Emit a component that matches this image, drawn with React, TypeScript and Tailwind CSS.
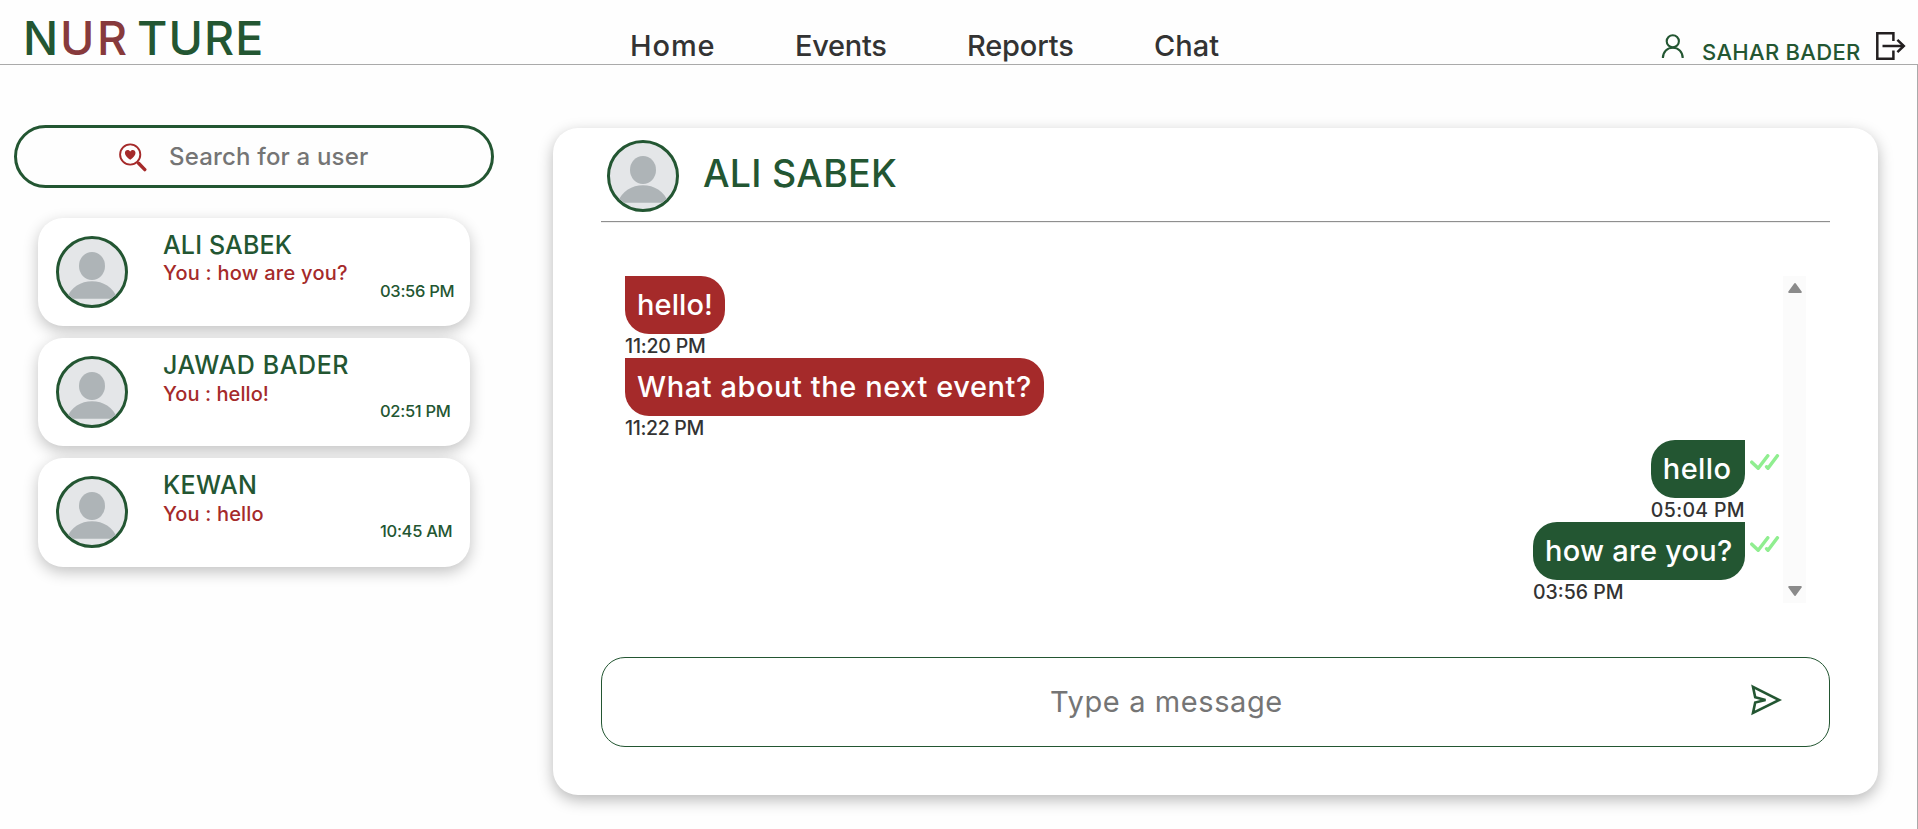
type Contact = {
  name: string;
  nameClass: string;
  last: string;
  lastClass: string;
  time: string;
  cardClass: string;
};

type Message = {
  text: string;
  time: string;
  mine: boolean;
  bubbleClass: string;
  timeClass: string;
};

const navItems = [
  { label: "Home", className: "w-[165px] tracking-[0.9px]" },
  { label: "Events", className: "w-[172px] tracking-[-0.3px]" },
  { label: "Reports", className: "w-[187px] tracking-[-0.17px]" },
  { label: "Chat", className: "tracking-[0px]" },
];

const contacts: Contact[] = [
  { name: "ALI SABEK", nameClass: "tracking-[0.15px]", last: "You : how are you?", lastClass: "mt-[2px] tracking-[0.25px]", time: "03:56 PM", cardClass: "h-[108px]" },
  { name: "JAWAD BADER", nameClass: "tracking-[0.6px]", last: "You : hello!", lastClass: "mt-[3px] tracking-[0.08px]", time: "02:51 PM", cardClass: "h-[108px]" },
  { name: "KEWAN", nameClass: "tracking-[0.4px]", last: "You : hello", lastClass: "mt-[3px] tracking-[0.16px]", time: "10:45 AM", cardClass: "h-[109px]" },
];

const messages: Message[] = [
  { text: "hello!", time: "11:20 PM", mine: false, bubbleClass: "w-[100px] tracking-[0.1px]", timeClass: "tracking-[-0.2px]" },
  { text: "What about the next event?", time: "11:22 PM", mine: false, bubbleClass: "w-[419px] tracking-[0.57px]", timeClass: "tracking-[-0.33px]" },
  { text: "hello", time: "05:04 PM", mine: true, bubbleClass: "w-[94px] tracking-[0.4px]", timeClass: "tracking-[0.34px]" },
  { text: "how are you?", time: "03:56 PM", mine: true, bubbleClass: "w-[212px] tracking-[0.25px]", timeClass: "tracking-[0px]" },
];

function Avatar() {
  return (
    <div className="size-[72px] shrink-0 overflow-hidden rounded-full border-[3px] border-[#235632] bg-[#e4e6e8]">
      <svg viewBox="3 3 66 66" className="block size-full">
        <ellipse cx="36" cy="30" rx="13" ry="14" fill="#aeb4b7" />
        <path d="M10.5 62.7 C15 51 25 45.3 36 45.3 C47 45.3 57 51 61.5 62.7 Z" fill="#aeb4b7" />
      </svg>
    </div>
  );
}

function SearchHeartIcon() {
  return (
    <svg viewBox="0 0 28 29" className="h-[29px] w-[28px] shrink-0" fill="none">
      <circle cx="11.2" cy="11.5" r="10.1" stroke="#a52a2a" strokeWidth="1.9" />
      <path d="M19.6 20.2 L25.8 26.6" stroke="#a52a2a" strokeWidth="3.4" strokeLinecap="round" />
      <path
        d="M11.2 16.7 C8.3 14.6 5.9 12.6 5.9 10 C5.9 8.2 7.1 7.1 8.6 7.1 C9.8 7.1 10.7 7.7 11.2 8.6 C11.7 7.7 12.6 7.1 13.8 7.1 C15.3 7.1 16.5 8.2 16.5 10 C16.5 12.6 14.1 14.6 11.2 16.7 Z"
        fill="#a52a2a"
      />
    </svg>
  );
}

function DoubleCheck() {
  return (
    <svg viewBox="0 0 30 17" className="mt-[14px] h-[17px] w-[30px] shrink-0" fill="none" stroke="#90ee90" strokeWidth="3.5" strokeLinecap="round" strokeLinejoin="round">
      <path d="M1.8 8.2 L8.2 14.2 L17.8 1.8" />
      <path d="M16.6 12.8 L18 14.2 L27.4 1.8" />
    </svg>
  );
}

function MessageRow({ text, time, mine, bubbleClass, timeClass }: Message) {
  return (
    <div className={mine ? "flex justify-end gap-[5px] pr-[3px]" : "flex"}>
      <div>
        <p
          className={`${bubbleClass} h-[58px] rounded-b-[24px] pl-[12px] text-[29px] leading-[58px] font-medium whitespace-nowrap text-white ${
            mine ? "rounded-tl-[24px] bg-[#235632]" : "rounded-tr-[24px] bg-[#a52a2a]"
          }`}
        >
          {text}
        </p>
        <p className={`${timeClass} h-6 text-[19.5px] leading-6 font-medium text-[#333]`}>{time}</p>
      </div>
      {mine && <DoubleCheck />}
    </div>
  );
}

function Header() {
  return (
    <header className="flex h-[65px] items-start border-b border-[#aaa] text-[#235632]">
      <div className="mt-[13px] flex w-[606px] pl-[23px] text-[46.5px] leading-[50px] font-medium">
        <span className="w-[37px]">N</span>
        <span className="w-[77px] tracking-[2.5px] text-[#873a3c]">UR</span>
        <span className="tracking-[1.1px]">TURE</span>
      </div>
      <nav className="mt-[31px] flex w-[1033px] pl-[24px] text-[29px] leading-[30px] font-medium text-[#333]">
        {navItems.map((item) => (
          <a key={item.label} className={item.className}>
            {item.label}
          </a>
        ))}
      </nav>
      <div className="flex items-start pl-[22px]">
        <svg viewBox="0 0 24 25" className="mt-[34px] h-[25px] w-6" fill="none" stroke="#235632" strokeWidth="2.1">
          <circle cx="11.8" cy="7.3" r="6.1" />
          <path d="M1.9 24 C1.9 17.6 6.4 13.8 11.8 13.8 C17.2 13.8 21.7 17.6 21.7 24" />
        </svg>
        <span className="mt-[40px] ml-[17px] w-[174px] text-[22px] leading-6 font-medium tracking-[0.3px]">SAHAR BADER</span>
        <svg viewBox="0 0 30 28" className="mt-8 h-7 w-[30px]" fill="none" stroke="#231f20" strokeWidth="2.5">
          <path d="M17.4 9 V1.3 H1.3 V26.7 H17.4 V18.4" />
          <path d="M6.5 14 H28" />
          <path d="M21.4 7.9 L27.8 14 L21.4 20.1" />
        </svg>
      </div>
    </header>
  );
}

function Sidebar() {
  return (
    <aside className="w-[553px] shrink-0 pt-[60px] pl-[14px]">
      <div className="flex h-[63px] w-[480px] items-start rounded-full border-[3px] border-[#235632] pl-[102px]">
        <div className="mt-[15px]">
          <SearchHeartIcon />
        </div>
        <input
          placeholder="Search for a user"
          className="mt-[13px] ml-[22px] h-[32px] w-[240px] text-[24px] leading-[32px] font-medium tracking-[0.18px] outline-none placeholder:text-[#757575]"
        />
      </div>
      <ul className="mt-[30px] ml-[24px] flex w-[432px] flex-col gap-3">
        {contacts.map((c) => (
          <li key={c.name} className={`${c.cardClass} flex items-start rounded-[25px] bg-white pl-[18px] shadow-[0_5px_15px_rgba(0,0,0,0.24)]`}>
            <div className="mt-[18px]">
              <Avatar />
            </div>
            <div className="mt-[13px] ml-[35px] w-[217px] font-medium whitespace-nowrap">
              <p className={`${c.nameClass} text-[25px] leading-7 text-[#235632]`}>{c.name}</p>
              <p className={`${c.lastClass} text-[20px] leading-6 text-[#a52a2a]`}>{c.last}</p>
            </div>
            <p className="mt-[63px] text-[16.5px] leading-5 font-medium tracking-[-0.3px] text-[#235632]">{c.time}</p>
          </li>
        ))}
      </ul>
    </aside>
  );
}

function ChatPanel() {
  return (
    <section className="mt-[63px] h-[667px] w-[1325px] shrink-0 rounded-[25px] bg-white px-[48px] shadow-[0_5px_15px_rgba(0,0,0,0.28)]">
      <div className="flex h-[93px] items-start pl-[6px]">
        <div className="mt-3">
          <Avatar />
        </div>
        <h1 className="mt-[24px] ml-[24px] text-[37.5px] leading-[44px] font-medium tracking-[0.25px] text-[#235632]">ALI SABEK</h1>
      </div>
      <div className="h-[2px] border-t border-b border-t-[#8f8f8f] border-b-[#eee]" />
      <div className="mt-[53px] ml-6 flex h-[327px] w-[1181px]">
        <div className="w-[1158px]">
          {messages.map((m) => (
            <MessageRow key={m.time + m.text} {...m} />
          ))}
        </div>
        <div className="flex w-[23px] flex-col items-center justify-between bg-[#fbfbfb] py-[6px]">
          <svg viewBox="0 0 14 11" className="h-[11px] w-[14px]" fill="#8b8b8b" stroke="#8b8b8b" strokeWidth="2" strokeLinejoin="round">
            <path d="M7 2 L12.8 10 H1.2 Z" />
          </svg>
          <svg viewBox="0 0 14 11" className="h-[11px] w-[14px]" fill="#8b8b8b" stroke="#8b8b8b" strokeWidth="2" strokeLinejoin="round">
            <path d="M7 9 L12.8 1 H1.2 Z" />
          </svg>
        </div>
      </div>
      <div className="mt-[54px] flex h-[90px] items-start rounded-[24px] border border-[#235632]">
        <input
          placeholder="Type a message"
          className="mt-[27px] h-[34px] w-[1129px] text-center text-[29px] leading-[34px] tracking-[0.6px] outline-none placeholder:text-[#757575]"
        />
        <svg viewBox="0 0 32 32" className="mt-[26px] ml-[19px] size-8" fill="none" stroke="#235632" strokeWidth="2.6">
          <path d="M3 2.8 L29.2 16 L3 29 L5.2 18.6 L15.5 16 L5.2 13.3 Z" />
        </svg>
      </div>
    </section>
  );
}

export default function App() {
  return (
    <div className="flex h-[829px] w-[1918px] flex-col overflow-hidden bg-[#fefefe] font-['Inter',sans-serif]">
      <Header />
      <main className="flex flex-1 items-start border-r border-[#aaa]">
        <Sidebar />
        <ChatPanel />
      </main>
    </div>
  );
}
